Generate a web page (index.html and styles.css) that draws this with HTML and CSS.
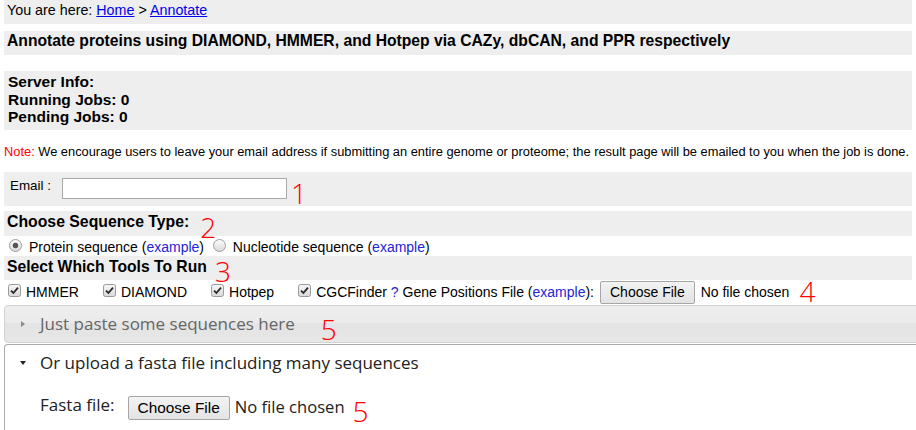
FILE: index.html
```html
<!DOCTYPE html>
<html lang="en">
<head>
<meta charset="utf-8">
<title>Annotate</title>
<link rel="stylesheet" href="styles.css">
</head>
<body>
<div class="page">
  <div class="band crumb">You are here: <a href="#">Home</a> &gt; <a href="#">Annotate</a></div>
  <div class="band title">Annotate proteins using DIAMOND, HMMER, and Hotpep via CAZy, dbCAN, and PPR respectively</div>
  <div class="band server">
    <div>Server Info:</div>
    <div>Running Jobs: 0</div>
    <div>Pending Jobs: 0</div>
  </div>
  <p class="note"><span class="red">Note:</span> We encourage users to leave your email address if submitting an entire genome or proteome; the result page will be emailed to you when the job is done.</p>
  <form class="form">
    <div class="band email">
      <label class="email-label" for="email">Email :</label>
      <input class="email-input" id="email" type="text">
      <span class="mark m1">1</span>
    </div>
    <div class="band heading seq">Choose Sequence Type:<span class="mark m2">2</span></div>
    <div class="radios"><input class="radio" type="radio" name="seqtype" checked> Protein sequence (<a class="ex" href="#">example</a>) <input class="radio" type="radio" name="seqtype"> Nucleotide sequence (<a class="ex" href="#">example</a>)</div>
    <div class="band heading tools">Select Which Tools To Run<span class="mark m3">3</span></div>
    <div class="checks">
      <span class="check"><svg class="cb" width="13" height="13" viewBox="0 0 13 13"><defs><linearGradient id="g" x1="0" y1="0" x2="0" y2="1"><stop offset="0" stop-color="#f8f8f8"/><stop offset="1" stop-color="#d8d8d8"/></linearGradient></defs><rect x="0.5" y="0.5" width="12" height="12" rx="2" fill="url(#g)" stroke="#9a9a9a"/><path d="M3 6.6 L5.4 9 L10 3.6" fill="none" stroke="#2a2a2a" stroke-width="1.8"/></svg>HMMER</span>
      <span class="check"><svg class="cb" width="13" height="13" viewBox="0 0 13 13"><rect x="0.5" y="0.5" width="12" height="12" rx="2" fill="url(#g)" stroke="#9a9a9a"/><path d="M3 6.6 L5.4 9 L10 3.6" fill="none" stroke="#2a2a2a" stroke-width="1.8"/></svg>DIAMOND</span>
      <span class="check"><svg class="cb" width="13" height="13" viewBox="0 0 13 13"><rect x="0.5" y="0.5" width="12" height="12" rx="2" fill="url(#g)" stroke="#9a9a9a"/><path d="M3 6.6 L5.4 9 L10 3.6" fill="none" stroke="#2a2a2a" stroke-width="1.8"/></svg>Hotpep</span>
      <span class="check last"><svg class="cb" width="13" height="13" viewBox="0 0 13 13"><rect x="0.5" y="0.5" width="12" height="12" rx="2" fill="url(#g)" stroke="#9a9a9a"/><path d="M3 6.6 L5.4 9 L10 3.6" fill="none" stroke="#2a2a2a" stroke-width="1.8"/></svg>CGCFinder&nbsp;<span class="q">?</span>&nbsp;Gene Positions File (<a class="ex" href="#">example</a>):</span>
      <button class="filebtn" type="button">Choose File</button>
      <span class="nofile">No file chosen</span>
      <span class="mark m4">4</span>
    </div>
    <div class="accordion">
      <div class="acc-head closed"><span class="tri tri-right"></span>Just paste some sequences here<span class="mark m5">5</span></div>
      <div class="acc-head open"><span class="tri tri-down"></span>Or upload a fasta file including many sequences</div>
      <div class="acc-body">
        <span class="fasta-label">Fasta file:</span>
        <button class="filebtn big" type="button">Choose File</button>
        <span class="nofile big">No file chosen</span>
        <span class="mark m6">5</span>
      </div>
    </div>
  </form>
</div>
</body>
</html>
```
FILE: styles.css
```css
html, body {
  margin: 0;
  padding: 0;
  background: #fff;
}
body {
  font-family: "Liberation Sans", Arial, sans-serif;
  font-size: 14px;
  color: #000;
  overflow: hidden;
}
.page {
  padding: 0 4px;
}
.band {
  background: #eeeeee;
}
.crumb {
  padding: 0 3px 4px;
  font-size: 14.3px;
  line-height: 20px;
}
.crumb a {
  color: #0000ee;
}
.title {
  margin-top: 7px;
  font-weight: bold;
  font-size: 15.7px;
  line-height: 20px;
  padding: 0 3px 4px;
}
.server {
  margin-top: 16px;
  font-weight: bold;
  font-size: 15.5px;
  line-height: 17.6px;
  padding: 2px 4px 4px;
}
.note {
  margin: 14px 0 12px;
  font-size: 12.85px;
  line-height: 16px;
  white-space: nowrap;
}
.red {
  color: #ff0000;
}
.mark {
  font-family: "Open Sans", sans-serif;
  font-weight: 300;
  font-size: 28px;
  line-height: 28px;
  color: #ff0000;
  height: 0;
  align-self: flex-start;
}
.email {
  display: flex;
  align-items: flex-start;
  padding: 6px 0 7px 6px;
}
.email-label {
  font-size: 13.4px;
  line-height: 16px;
  margin-top: 0.5px;
  margin-right: 11px;
}
.email-input {
  width: 225px;
  height: 21px;
  box-sizing: border-box;
  border: 1px solid #a9a9a9;
  margin: 0;
  padding: 1px 3px;
}
.m1 {
  margin: 1px 0 0 4px;
}
.heading {
  display: flex;
  align-items: flex-start;
  font-weight: bold;
  padding: 0 3px;
  box-sizing: border-box;
}
.seq {
  margin-top: 5px;
  font-size: 15.8px;
  line-height: 22px;
  height: 25px;
}
.m2 {
  margin: 2px 0 0 11px;
}
.tools {
  font-size: 15.7px;
  line-height: 22px;
  height: 24px;
}
.m3 {
  margin: 1px 0 0 8px;
}
.radios {
  height: 20px;
  font-size: 14px;
}
.radio {
  appearance: none;
  -webkit-appearance: none;
  width: 13px;
  height: 13px;
  box-sizing: border-box;
  margin: 3px 3px 0 5px;
  border: 1px solid #9c9c9c;
  border-radius: 50%;
  background: linear-gradient(#fcfcfc, #dadada);
  vertical-align: baseline;
}
.radio:checked {
  background: radial-gradient(circle, #555 0, #555 2.4px, rgba(85,85,85,0) 3.2px), linear-gradient(#fcfcfc, #dadada);
}
.ex {
  color: #2424d4;
  text-decoration: none;
}
.checks {
  display: flex;
  align-items: center;
  height: 25px;
  font-size: 14px;
}
.check {
  display: flex;
  align-items: center;
  margin-right: 20px;
}
.check.last {
  margin-right: 0;
}
.cb {
  margin: -3px 5px 0 4px;
  flex: none;
}
.q {
  color: #2424d4;
}
.filebtn {
  font-family: "Liberation Sans", Arial, sans-serif;
  font-size: 14px;
  color: #000;
  height: 23px;
  padding: 0 9px;
  margin: 0 6px;
  border: 1px solid #a6a6a6;
  border-radius: 2px;
  background: linear-gradient(#f3f3f3, #e3e3e3);
}
.nofile {
  white-space: nowrap;
}
.m4 {
  margin: -3px 0 0 10px;
}
.accordion {
  margin-right: -20px;
  font-family: "Open Sans", sans-serif;
  font-size: 17px;
}
.acc-head {
  display: flex;
  align-items: center;
  padding: 8px 8px 8px 10px;
  line-height: 20px;
  border: 1px solid #d3d3d3;
}
.acc-head.closed {
  border-radius: 4px;
  color: #666;
  background: linear-gradient(#eeeeee 0%, #ebebeb 46%, #e4e4e4 47%, #e6e6e6 100%);
}
.acc-head.open {
  margin-top: 1px;
  border-color: #aaaaaa;
  border-bottom: 0;
  border-radius: 4px 4px 0 0;
  color: #222;
  background: #fff;
}
.tri {
  width: 16px;
  height: 16px;
  margin-right: 9px;
  display: flex;
  align-items: center;
  justify-content: center;
  flex: none;
}
.tri-right::before {
  content: "";
  border-left: 4px solid #8a8a8a;
  border-top: 3.5px solid transparent;
  border-bottom: 3.5px solid transparent;
}
.tri-down::before {
  content: "";
  border-top: 4px solid #222;
  border-left: 3.5px solid transparent;
  border-right: 3.5px solid transparent;
}
.m5 {
  margin: 1px 0 0 26px;
}
.acc-body {
  display: flex;
  align-items: flex-start;
  border: 1px solid #aaaaaa;
  border-top: 0;
  padding: 15px 35px 20px;
  color: #222;
  background: #fff;
}
.fasta-label {
  line-height: 18px;
  margin-right: 13px;
}
.filebtn.big {
  font-size: 15.4px;
  height: 24px;
  padding: 0 9px;
  margin: 0 5px 0 0;
}
.nofile.big {
  font-size: 16.6px;
  line-height: 18px;
  margin-top: 2px;
}
.m6 {
  margin: 1px 0 0 8px;
}
```
